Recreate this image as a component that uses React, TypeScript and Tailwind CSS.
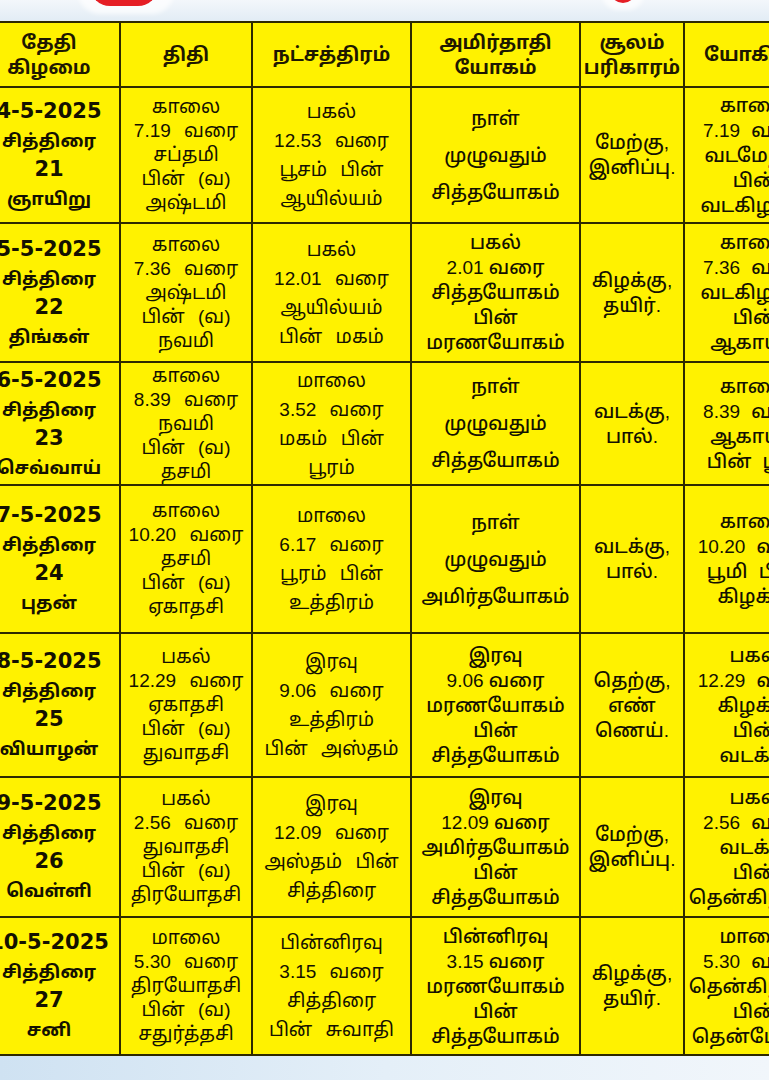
import React from "react";

type Cell = { lines: string[]; loose?: boolean };

const HEADERS: string[][] = [
  ["தேதி", "கிழமை"],
  ["திதி"],
  ["நட்சத்திரம்"],
  ["அமிர்தாதி", "யோகம்"],
  ["சூலம்", "பரிகாரம்"],
  ["யோகினி"],
];

const ROWS: { h: string; cells: Cell[] }[] = [
  {
    h: "h-[134px]",
    cells: [
      { lines: ["4-5-2025", "சித்திரை", "21", "ஞாயிறு"] },
      { lines: ["காலை", "7.19 வரை", "சப்தமி", "பின் (வ)", "அஷ்டமி"] },
      { lines: ["பகல்", "12.53 வரை", "பூசம் பின்", "ஆயில்யம்"] },
      { lines: ["நாள்", "முழுவதும்", "சித்தயோகம்"], loose: true },
      { lines: ["மேற்கு,", "இனிப்பு."] },
      { lines: ["காலை", "7.19 வரை", "வடமேற்கு", "பின்", "வடகிழக்கு"] },
    ],
  },
  {
    h: "h-[137px]",
    cells: [
      { lines: ["5-5-2025", "சித்திரை", "22", "திங்கள்"] },
      { lines: ["காலை", "7.36 வரை", "அஷ்டமி", "பின் (வ)", "நவமி"] },
      { lines: ["பகல்", "12.01 வரை", "ஆயில்யம்", "பின் மகம்"] },
      { lines: ["பகல்", "2.01 வரை", "சித்தயோகம்", "பின்", "மரணயோகம்"] },
      { lines: ["கிழக்கு,", "தயிர்."] },
      { lines: ["காலை", "7.36 வரை", "வடகிழக்கு", "பின்", "ஆகாயம்"] },
    ],
  },
  {
    h: "h-[121px]",
    cells: [
      { lines: ["6-5-2025", "சித்திரை", "23", "செவ்வாய்"] },
      { lines: ["காலை", "8.39 வரை", "நவமி", "பின் (வ)", "தசமி"] },
      { lines: ["மாலை", "3.52 வரை", "மகம் பின்", "பூரம்"] },
      { lines: ["நாள்", "முழுவதும்", "சித்தயோகம்"], loose: true },
      { lines: ["வடக்கு,", "பால்."] },
      { lines: ["காலை", "8.39 வரை", "ஆகாயம்", "பின் பூமி"] },
    ],
  },
  {
    h: "h-[146px]",
    cells: [
      { lines: ["7-5-2025", "சித்திரை", "24", "புதன்"] },
      { lines: ["காலை", "10.20 வரை", "தசமி", "பின் (வ)", "ஏகாதசி"] },
      { lines: ["மாலை", "6.17 வரை", "பூரம் பின்", "உத்திரம்"] },
      { lines: ["நாள்", "முழுவதும்", "அமிர்தயோகம்"], loose: true },
      { lines: ["வடக்கு,", "பால்."] },
      { lines: ["காலை", "10.20 வரை", "பூமி பின்", "கிழக்கு"] },
    ],
  },
  {
    h: "h-[142px]",
    cells: [
      { lines: ["8-5-2025", "சித்திரை", "25", "வியாழன்"] },
      { lines: ["பகல்", "12.29 வரை", "ஏகாதசி", "பின் (வ)", "துவாதசி"] },
      { lines: ["இரவு", "9.06 வரை", "உத்திரம்", "பின் அஸ்தம்"] },
      { lines: ["இரவு", "9.06 வரை", "மரணயோகம்", "பின்", "சித்தயோகம்"] },
      { lines: ["தெற்கு,", "எண்", "ணெய்."] },
      { lines: ["பகல்", "12.29 வரை", "கிழக்கு", "பின்", "வடக்கு"] },
    ],
  },
  {
    h: "h-[138px]",
    cells: [
      { lines: ["9-5-2025", "சித்திரை", "26", "வெள்ளி"] },
      { lines: ["பகல்", "2.56 வரை", "துவாதசி", "பின் (வ)", "திரயோதசி"] },
      { lines: ["இரவு", "12.09 வரை", "அஸ்தம் பின்", "சித்திரை"] },
      { lines: ["இரவு", "12.09 வரை", "அமிர்தயோகம்", "பின்", "சித்தயோகம்"] },
      { lines: ["மேற்கு,", "இனிப்பு."] },
      { lines: ["பகல்", "2.56 வரை", "வடக்கு", "பின்", "தென்கிழக்கு"] },
    ],
  },
  {
    h: "h-[136px]",
    cells: [
      { lines: ["10-5-2025", "சித்திரை", "27", "சனி"] },
      { lines: ["மாலை", "5.30 வரை", "திரயோதசி", "பின் (வ)", "சதுர்த்தசி"] },
      { lines: ["பின்னிரவு", "3.15 வரை", "சித்திரை", "பின் சுவாதி"] },
      { lines: ["பின்னிரவு", "3.15 வரை", "மரணயோகம்", "பின்", "சித்தயோகம்"] },
      { lines: ["கிழக்கு,", "தயிர்."] },
      { lines: ["மாலை", "5.30 வரை", "தென்கிழக்கு", "பின்", "தென்மேற்கு"] },
    ],
  },
];

// per-column text style
const COL_STYLE = [
  "font-['DejaVu_Sans','Noto_Sans_Tamil',sans-serif] font-bold text-[18px] leading-[29px]",
  "font-['Liberation_Sans','Noto_Sans_Tamil',sans-serif] text-[19px] leading-[24px] [word-spacing:8px]",
  "font-['Liberation_Sans','Noto_Sans_Tamil',sans-serif] text-[19px] leading-[29px] [word-spacing:8px]",
  "font-['Liberation_Sans','Noto_Sans_Tamil',sans-serif] font-medium text-[19px] leading-[25px]",
  "font-['Liberation_Sans','Noto_Sans_Tamil',sans-serif] font-medium text-[19px] leading-[25px]",
  "font-['Liberation_Sans','Noto_Sans_Tamil',sans-serif] font-medium text-[19px] leading-[25px] [word-spacing:6px]",
];

function TableCell({ cell, col }: { cell: Cell; col: number }) {
  return (
    <div className="bg-[#fff200] flex flex-col items-center justify-center text-center text-[#141100] whitespace-nowrap overflow-hidden">
      {cell.lines.map((l, i) => {
        const numeric = col === 0 && /^[0-9-]+$/.test(l);
        return (
          <div
            key={i}
            className={`${COL_STYLE[col]} ${numeric ? "text-[21px]" : ""} ${cell.loose ? "leading-[37px]" : ""}`}
          >
            {l}
          </div>
        );
      })}
    </div>
  );
}

export default function App() {
  return (
    <div className="relative w-[769px] h-[1080px] overflow-hidden bg-gradient-to-r from-[#cfe2f2] via-[#e4eff8] to-[#f1f6fb]">
      {/* top decoration strip */}
      <div className="relative h-[21px] bg-gradient-to-b from-[#f3f7fb] to-[#e2ecf5]">
        <div className="absolute left-[78px] -top-[30px] w-[96px] h-[44px] rounded-full bg-white/70 blur-[2px]" />
        <div className="absolute left-[90px] -top-[34px] w-[68px] h-[40px] rounded-full bg-[#e51e25]" />
        <div className="absolute left-[602px] -top-[22px] w-[42px] h-[32px] rounded-full bg-white/70 blur-[2px]" />
        <div className="absolute left-[610px] -top-[26px] w-[26px] h-[29px] rounded-full bg-[#e51e25]" />
      </div>

      <div className="-ml-[23px] w-[850px] grid grid-cols-[140px_130px_157px_167px_102px_140px] gap-[2px] p-[2px] bg-[#2e2900]">
        {HEADERS.map((h, i) => (
          <div
            key={i}
            className="h-[63px] bg-[#fff200] flex flex-col items-center justify-center text-center text-[#1e1800] font-['Liberation_Sans','Noto_Sans_Tamil',sans-serif] font-bold text-[19px] leading-[25px] whitespace-nowrap"
          >
            {h.map((l, j) => (
              <div key={j}>{l}</div>
            ))}
          </div>
        ))}
        {ROWS.map((r, ri) =>
          r.cells.map((c, ci) => (
            <div key={`${ri}-${ci}`} className={`${r.h} grid`}>
              <TableCell cell={c} col={ci} />
            </div>
          ))
        )}
      </div>
    </div>
  );
}
